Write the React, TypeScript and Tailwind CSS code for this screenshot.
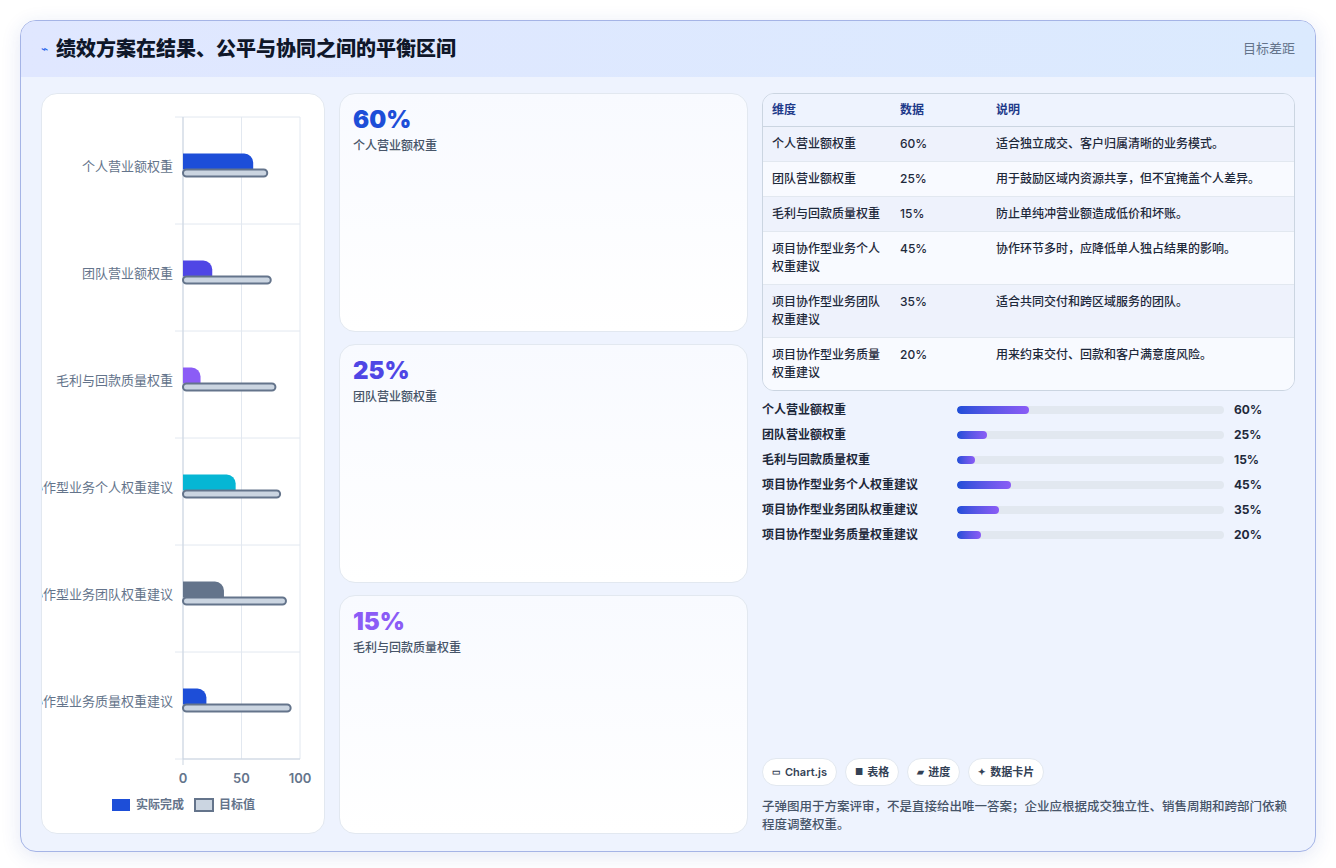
import React from "react";

const cats = [
  { n: "个人营业额权重", a: 60, t: 72, c: "#1d4ed8" },
  { n: "团队营业额权重", a: 25, t: 75, c: "#4f46e5" },
  { n: "毛利与回款质量权重", a: 15, t: 79, c: "#8b5cf6" },
  { n: "项目协作型业务个人权重建议", a: 45, t: 83, c: "#06b6d4" },
  { n: "项目协作型业务团队权重建议", a: 35, t: 88, c: "#64748b" },
  { n: "项目协作型业务质量权重建议", a: 20, t: 92, c: "#1d4ed8" },
];

const rows = [
  ["个人营业额权重", "60%", "适合独立成交、客户归属清晰的业务模式。"],
  ["团队营业额权重", "25%", "用于鼓励区域内资源共享，但不宜掩盖个人差异。"],
  ["毛利与回款质量权重", "15%", "防止单纯冲营业额造成低价和坏账。"],
  ["项目协作型业务个人权重建议", "45%", "协作环节多时，应降低单人独占结果的影响。"],
  ["项目协作型业务团队权重建议", "35%", "适合共同交付和跨区域服务的团队。"],
  ["项目协作型业务质量权重建议", "20%", "用来约束交付、回款和客户满意度风险。"],
];

function Chart() {
  const x0 = 141, x1 = 258, y0 = 23, y1 = 665;
  const sx = (v: number) => x0 + ((x1 - x0) * v) / 100;
  const band = (y1 - y0) / 6;
  return (
    <svg width="284" height="739" className="block" style={{ fontFamily: "Inter, 'Noto Sans CJK SC', sans-serif" }}>
      {[0, 50, 100].map((v) => (
        <line key={v} x1={sx(v)} x2={sx(v)} y1={y0} y2={y1} stroke="#e2e8f0" strokeWidth="1" />
      ))}
      {Array.from({ length: 7 }).map((_, i) => (
        <line key={i} x1={x0 - 8} x2={x1} y1={y0 + band * i} y2={y0 + band * i} stroke="#e2e8f0" strokeWidth="1" />
      ))}
      <line x1={x0} x2={x0} y1={y0} y2={y1 + 6} stroke="#cbd5e1" />
      <line x1={x0} x2={x1} y1={y1} y2={y1} stroke="#cbd5e1" />
      {cats.map((c, i) => {
        const cy = y0 + band * i + band / 2;
        return (
          <g key={i}>
            <text x={131} y={cy} textAnchor="end" fontSize="13" fill="#64748b">{c.n}</text>
            <path d={`M${x0} ${cy - 17} H${sx(c.a) - 9} A9 9 0 0 1 ${sx(c.a)} ${cy - 8} V${cy - 1} H${x0} Z`} fill={c.c} />
            <rect x={x0} y={cy - 1} width={sx(c.t) - x0} height={7} rx={3.5} fill="#cbd5e1" stroke="#64748b" strokeWidth="2" />
          </g>
        );
      })}
      {[0, 50, 100].map((v) => (
        <text key={v} x={sx(v)} y={689} textAnchor="middle" fontSize="13" fontWeight="600" fill="#64748b">{v}</text>
      ))}
      <rect x={70} y={705} width={18} height={12} fill="#1d4ed8" />
      <text x={94} y={715} fontSize="12" fontWeight="600" fill="#64748b">实际完成</text>
      <rect x={153} y={705} width={18} height={12} fill="#cbd5e1" stroke="#64748b" strokeWidth="2" />
      <text x={177} y={715} fontSize="12" fontWeight="600" fill="#64748b">目标值</text>
    </svg>
  );
}

export default function App() {
  return (
    <div className="min-h-[868px] bg-white p-5" style={{ fontFamily: "Inter, 'Noto Sans CJK SC', sans-serif" }}>
      <div className="h-[832px] rounded-2xl border border-[#a5b4e6] bg-[#eef3fe] overflow-hidden flex flex-col shadow-[0_4px_20px_rgba(30,64,175,0.12)]">
        <div className="h-14 shrink-0 flex items-center justify-between px-5 bg-gradient-to-r from-[#e0e7ff] to-[#dbeafe]">
          <div className="flex items-center gap-2">
            <span className="text-[#2563eb] text-xs">⌁</span>
            <span className="text-[20px] font-extrabold text-[#0f172a]">绩效方案在结果、公平与协同之间的平衡区间</span>
          </div>
          <span className="text-[13px] text-[#64748b]">目标差距</span>
        </div>
        <div className="flex-1 flex gap-[14px] px-5 pt-4 pb-5">
          <div className="w-[284px] shrink-0 rounded-2xl bg-white border border-[#e2e8f0] overflow-hidden">
            <Chart />
          </div>
          <div className="w-[409px] shrink-0 flex flex-col gap-3">
            {[["60%", "个人营业额权重", "text-[#1d4ed8]"], ["25%", "团队营业额权重", "text-[#4f46e5]"], ["15%", "毛利与回款质量权重", "text-[#8b5cf6]"]].map(([v, l, c]) => (
              <div key={v} className="flex-1 rounded-2xl border border-[#e2e8f0] bg-gradient-to-b from-[#f8faff] to-white px-[13px] pt-3">
                <div className={`text-[24px] font-black leading-7 ${c}`}>{v}</div>
                <div className="text-xs font-medium text-[#475569] mt-1">{l}</div>
              </div>
            ))}
          </div>
          <div className="flex-1 flex flex-col">
            <div className="rounded-xl border border-[#cbd5e1] overflow-hidden text-xs">
              <div className="flex h-[33px] items-center bg-[#eef3fe] text-[#1e3a8a] font-semibold border-b border-[#cbd5e1]">
                <div className="w-[137px] pl-[9px]">维度</div>
                <div className="w-[96px]">数据</div>
                <div className="flex-1">说明</div>
              </div>
              {rows.map((r, i) => (
                <div key={i} className={`flex py-2 text-[#1e293b] font-medium leading-[18px] ${i % 2 === 0 ? "bg-[#eef2fc]" : "bg-[#f8faff]"} ${i < 5 ? "border-b border-[#e2e8f0]" : ""}`}>
                  <div className="w-[137px] pl-[9px] pr-3">{r[0]}</div>
                  <div className="w-[96px]">{r[1]}</div>
                  <div className="flex-1">{r[2]}</div>
                </div>
              ))}
            </div>
            <div className="mt-[10px] flex flex-col gap-[7px]">
              {rows.map((r, i) => (
                <div key={i} className="flex items-center h-[18px] text-xs font-semibold text-[#1e293b]">
                  <div className="w-[195px]">{r[0]}</div>
                  <div className="w-[267px] h-2 rounded-full bg-[#e2e8f0] overflow-hidden">
                    <div className="h-full rounded-full bg-gradient-to-r from-[#1d4ed8] to-[#8b5cf6]" style={{ width: `${parseInt(r[1]) * 0.45}%` }} />
                  </div>
                  <div className="ml-[10px] font-bold">{r[1]}</div>
                </div>
              ))}
            </div>
            <div className="flex-1" />
            <div className="flex gap-2">
              {[["▭", "Chart.js"], ["■", "表格"], ["▰", "进度"], ["✦", "数据卡片"]].map(([ic, t]) => (
                <div key={t} className="h-7 px-[9px] rounded-full bg-white border border-[#e2e8f0] flex items-center gap-1 text-[11px] font-semibold text-[#334155]">
                  <span className="text-[9px]">{ic}</span>{t}
                </div>
              ))}
            </div>
            <p className="mt-3 text-[12.5px] leading-[18px] font-medium text-[#475569]">子弹图用于方案评审，不是直接给出唯一答案；企业应根据成交独立性、销售周期和跨部门依赖程度调整权重。</p>
          </div>
        </div>
      </div>
    </div>
  );
}
